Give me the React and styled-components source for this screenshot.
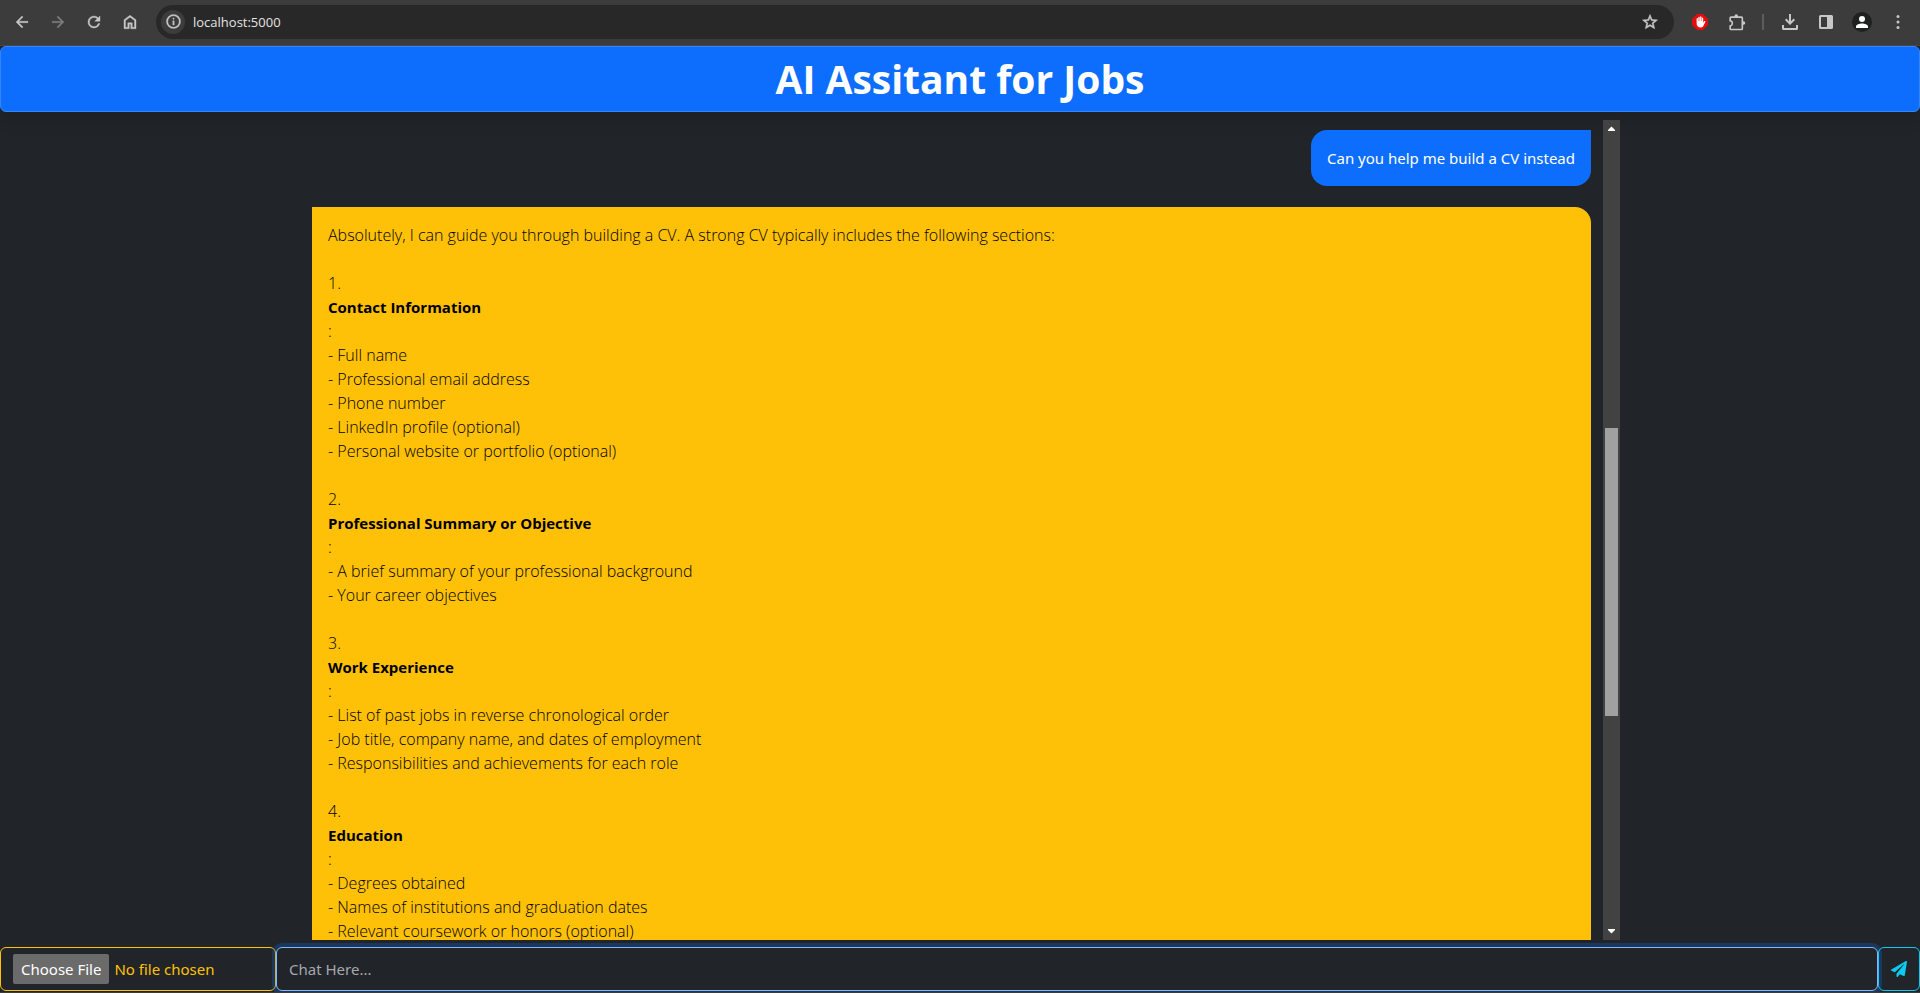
import React from "react";
import styled, { createGlobalStyle, css } from "styled-components";

const GlobalStyle = createGlobalStyle`
  *, *::before, *::after { box-sizing: border-box; }
  body { margin: 0; background: #212529; }
  body, input, button { font-family: "Segoe UI", "Noto Sans", "Open Sans", sans-serif; }
`;

const Page = styled.div`
  display: flex;
  flex-direction: column;
  height: 100vh;
  background: #212529;
  color: #dee2e6;
  font-size: 15px;
  line-height: 24px;
  overflow: hidden;
  border-bottom: 1px solid #3c3c3c;
`;

const BrowserBar = styled.nav`
  display: flex;
  align-items: center;
  gap: 8px;
  flex: none;
  height: 46px;
  padding: 0 8px 2px 4px;
  background: #3c3c3c;
  border-bottom: 1px solid #4a4a4a;
`;

const IconButton = styled.button`
  display: grid;
  place-items: center;
  flex: none;
  width: ${(p) => p.$size || 28}px;
  height: ${(p) => p.$size || 28}px;
  padding: 0;
  border: 0;
  border-radius: 50%;
  background: ${(p) => p.$bg || "transparent"};
  color: ${(p) => (p.$muted ? "#7d7d7d" : "#c7c7c7")};
`;

const NavGroup = styled.div`
  display: flex;
  gap: 8px;
  padding: 0 4px;
`;

const ToolGroup = styled.div`
  display: flex;
  align-items: center;
  gap: 8px;
  padding-left: 4px;
`;

const AddressBar = styled.div`
  display: flex;
  align-items: center;
  flex: 1;
  height: 34px;
  padding: 0 10px 0 5px;
  border-radius: 17px;
  background: #282828;
`;

const Address = styled.input`
  flex: 1;
  min-width: 0;
  margin-left: 8px;
  padding: 0;
  border: 0;
  outline: 0;
  background: transparent;
  color: #e3e3e3;
  font-family: "Segoe UI", "Open Sans", sans-serif;
  font-size: 13px;
`;

const Divider = styled.span`
  width: 2px;
  height: 16px;
  margin: 0 4px;
  background: #5c5c5c;
`;

const Header = styled.header`
  flex: none;
  height: 66px;
  border: 1px solid #3485fd;
  border-radius: 6px;
  background: #0d6efd;
  box-shadow: 0 8px 16px rgba(0, 0, 0, 0.15);
  text-align: center;
`;

const Title = styled.h1`
  margin: 0;
  color: #fff;
  font-family: "Segoe UI", "Open Sans", sans-serif;
  font-size: 39px;
  font-weight: 700;
  line-height: 64px;
`;

const Chat = styled.main`
  display: flex;
  flex: 1;
  min-height: 0;
  width: 100%;
  max-width: 1320px;
  margin: 8px auto 7px;
`;

const Messages = styled.div`
  display: flex;
  flex-direction: column;
  gap: 21px;
  flex: 1;
  min-width: 0;
  padding: 10px 12px 0;
  overflow: hidden;
`;

const bubble = css`
  flex: none;
  padding: 16px;
`;

const UserMessage = styled.div`
  ${bubble}
  align-self: flex-end;
  border-radius: 16px 0 16px 16px;
  background: #0d6efd;
  color: #fff;
`;

const AssistantMessage = styled.article`
  ${bubble}
  border-radius: 0 16px 16px 16px;
  background: #ffc107;
  color: #000;
  font-family: "Segoe UI", "Open Sans", sans-serif;
  font-size: 16px;
  font-weight: 300;
`;

const Line = styled.div`
  min-height: 24px;
`;

const Section = styled.section`
  padding-top: 24px;
`;

const SectionTitle = styled.h2`
  margin: 0;
  font-size: 15px;
  font-weight: 700;
  line-height: 24px;
`;

const Scrollbar = styled.div`
  display: flex;
  flex-direction: column;
  align-items: center;
  flex: none;
  width: 17px;
  background: #424242;
`;

const ScrollArrow = styled.div`
  display: grid;
  place-items: center;
  flex: none;
  width: 17px;
  height: 17px;
`;

const ScrollTrack = styled.div`
  display: grid;
  grid-template-rows: 291fr 288fr 207fr;
  flex: 1;
  width: 13px;
`;

const ScrollThumb = styled.div`
  grid-row: 2;
  background: #a1a1a1;
`;

const Composer = styled.form`
  display: flex;
  flex: none;
  height: 45px;
  padding-bottom: 1px;
`;

const FileInput = styled.input`
  flex: none;
  width: 276px;
  padding: 6px 12px;
  border: 1px solid #ffc107;
  border-radius: 6px;
  background: transparent;
  color: #ffc107;
  font-size: 15px;
  line-height: 24px;

  &::file-selector-button {
    height: 30px;
    margin: 0 5px 0 0;
    padding: 0 8px;
    border: 0;
    border-radius: 2px;
    background: #6b6b6b;
    color: #fff;
    font: inherit;
  }
`;

const MessageInput = styled.input`
  flex: 1;
  min-width: 0;
  padding: 6px 12px;
  border: 1px solid #86b7fe;
  border-radius: 6px;
  outline: 0;
  background: #212529;
  color: #dee2e6;
  box-shadow: 0 0 0 4px rgba(13, 110, 253, 0.25);
  font-size: 15px;

  &::placeholder { color: #a6a8aa; opacity: 1; }
`;

const SendButton = styled.button`
  display: grid;
  place-items: center;
  flex: none;
  width: 42px;
  padding: 0;
  border: 1px solid #0dcaf0;
  border-radius: 6px;
  background: transparent;
  color: #0dcaf0;
`;

const Glyph = ({ size = 18, box = 24, bold = 0, children }) => (
  <svg
    width={size}
    height={size}
    viewBox={`0 0 ${box} ${box}`}
    fill="currentColor"
    stroke={bold ? "currentColor" : "none"}
    strokeWidth={bold}
    aria-hidden="true"
  >
    {children}
  </svg>
);

const sections = [
  {
    title: "Contact Information",
    items: [
      "Full name",
      "Professional email address",
      "Phone number",
      "LinkedIn profile (optional)",
      "Personal website or portfolio (optional)",
    ],
  },
  {
    title: "Professional Summary or Objective",
    items: ["A brief summary of your professional background", "Your career objectives"],
  },
  {
    title: "Work Experience",
    items: [
      "List of past jobs in reverse chronological order",
      "Job title, company name, and dates of employment",
      "Responsibilities and achievements for each role",
    ],
  },
  {
    title: "Education",
    items: [
      "Degrees obtained",
      "Names of institutions and graduation dates",
      "Relevant coursework or honors (optional)",
    ],
  },
];

function BrowserToolbar() {
  return (
    <BrowserBar aria-label="Browser">
      <NavGroup>
        <IconButton aria-label="Back">
          <Glyph bold={0.4}><path d="M20 11H7.83l5.59-5.59L12 4l-8 8 8 8 1.41-1.41L7.83 13H20z" /></Glyph>
        </IconButton>
        <IconButton aria-label="Forward" $muted>
          <Glyph bold={0.4}><path d="M12 4l-1.41 1.41L16.17 11H4v2h12.17l-5.58 5.59L12 20l8-8z" /></Glyph>
        </IconButton>
        <IconButton aria-label="Reload">
          <Glyph bold={0.5}><path d="M17.65 6.35A7.96 7.96 0 0 0 12 4a8 8 0 1 0 7.73 10h-2.08A6 6 0 1 1 12 6c1.66 0 3.14.69 4.22 1.78L13 11h7V4z" /></Glyph>
        </IconButton>
        <IconButton aria-label="Home">
          <Glyph bold={0.5}><path d="M6 19h3v-6h6v6h3v-9l-6-4.5L6 10zm-2 2V9l8-6 8 6v12h-7v-6h-2v6z" /></Glyph>
        </IconButton>
      </NavGroup>
      <AddressBar>
        <IconButton aria-label="Site information" $size={24} $bg="#3c3c3c">
          <Glyph size={17} bold={0.5}><path d="M11 17h2v-6h-2zm1-8a1 1 0 0 0 1-1 1 1 0 1 0-2 0 1 1 0 0 0 1 1zm0 13a10 10 0 1 1 0-20 10 10 0 0 1 0 20zm0-2a8 8 0 1 0 0-16 8 8 0 0 0 0 16z" /></Glyph>
        </IconButton>
        <Address aria-label="Address" defaultValue="localhost:5000" />
        <IconButton aria-label="Bookmark">
          <Glyph bold={0.7}><path d="M22 9.24l-7.19-.62L12 2 9.19 8.63 2 9.24l5.46 4.73L5.82 21 12 17.27 18.18 21l-1.63-7.03zM12 15.4l-3.76 2.27 1-4.28-3.32-2.88 4.38-.38L12 6.1l1.71 4.04 4.38.38-3.32 2.88 1 4.28z" /></Glyph>
        </IconButton>
      </AddressBar>
      <ToolGroup>
        <IconButton aria-label="Ad blocker">
          <Glyph size={16} box={16}>
            <path fill="#e40d0d" d="M5 0h6l5 5v6l-5 5H5l-5-5V5z" />
            <path fill="#fff" d="M4.6 9V4.8c0-1 1.3-1 1.3 0V7h.4V3.5c0-1.1 1.4-1.1 1.4 0V7h.4V2.9c0-1 1.4-1 1.4 0V7h.4V4.2c0-1 1.3-1 1.3 0v4.600l.8-1.200c.6-.9 1.700-.4 1.300.4l-2 4c-.5 1-1.200 1.400-2.500 1.400C5.800 13.400 4.600 12 4.600 9z" />
          </Glyph>
        </IconButton>
        <IconButton aria-label="Extensions">
          <Glyph size={20}><path d="M6 5.200h4.200v-.4a2.100 2.100 0 0 1 4.200 0v.4h4.200a2 2 0 0 1 2 2V11h.4a2.100 2.100 0 0 1 0 4.200h-.4V20a2 2 0 0 1-2 2H6a2 2 0 0 1-2-2v-4.100h.4a2.300 2.300 0 0 0 0-4.600H4V7.200a2 2 0 0 1 2-2zm0 2v2.500a4.200 4.200 0 0 1 0 7.800V20h12.600V7.200z" fillRule="evenodd" /></Glyph>
        </IconButton>
        <Divider />
        <IconButton aria-label="Downloads">
          <Glyph size={16} box={16}><path d="M7 0h2v7.200l2.600-2.600L13 6l-5 5-5-5 1.400-1.400L7 7.200zM0 11h2v3h12v-3h2v3.500a1.500 1.500 0 0 1-1.500 1.500h-13A1.500 1.500 0 0 1 0 14.500z" /></Glyph>
        </IconButton>
        <IconButton aria-label="Side panel">
          <Glyph size={16} box={16}><path fillRule="evenodd" d="M2.500 1h11A1.500 1.500 0 0 1 15 2.500v11a1.500 1.500 0 0 1-1.500 1.500h-11A1.500 1.500 0 0 1 1 13.500v-11A1.500 1.500 0 0 1 2.500 1zM3 3v10h6V3z" /></Glyph>
        </IconButton>
        <IconButton aria-label="Profile">
          <Glyph size={20} box={20}>
            <circle cx="10" cy="10" r="10" fill="#1f2020" />
            <circle cx="10" cy="7" r="3" fill="#fff" />
            <path fill="#fff" d="M4 16v-1.500c0-2 3.500-3 6-3s6 1 6 3V16z" />
          </Glyph>
        </IconButton>
        <IconButton aria-label="More">
          <Glyph size={16} box={16}>
            <circle cx="8" cy="2.500" r="1.500" /><circle cx="8" cy="8" r="1.500" /><circle cx="8" cy="13.500" r="1.500" />
          </Glyph>
        </IconButton>
      </ToolGroup>
    </BrowserBar>
  );
}

export default function App() {
  return (
    <Page>
      <GlobalStyle />
      <BrowserToolbar />
      <Header><Title>AI Assitant for Jobs</Title></Header>
      <Chat>
        <Messages>
          <UserMessage>Can you help me build a CV instead</UserMessage>
          <AssistantMessage>
            <Line>Absolutely, I can guide you through building a CV. A strong CV typically includes the following sections:</Line>
            {sections.map((section, i) => (
              <Section key={section.title}>
                <Line>{i + 1}.</Line>
                <SectionTitle>{section.title}</SectionTitle>
                <Line>:</Line>
                {section.items.map((item) => <Line key={item}>- {item}</Line>)}
              </Section>
            ))}
          </AssistantMessage>
        </Messages>
        <Scrollbar aria-hidden="true">
          <ScrollArrow><Glyph size={7} box={7}><path fill="#fff" d="M3.500 1.500L7 5v1H0V5z" /></Glyph></ScrollArrow>
          <ScrollTrack><ScrollThumb /></ScrollTrack>
          <ScrollArrow><Glyph size={7} box={7}><path fill="#fff" d="M0 1h7v1L3.500 5.500 0 2z" /></Glyph></ScrollArrow>
        </Scrollbar>
      </Chat>
      <Composer onSubmit={(e) => e.preventDefault()}>
        <FileInput type="file" aria-label="Choose a file" />
        <MessageInput type="text" aria-label="Message" placeholder="Chat Here..." />
        <SendButton aria-label="Send">
          <Glyph size={16} box={512}><path d="M476 3.200L12.500 270.600c-18.100 10.400-15.800 35.600 2.200 43.200L121 358.400l287.300-253.200c5.500-4.900 13.300 2.600 8.600 8.300L176 407v80.500c0 23.600 28.500 32.900 42.500 15.800L282 426l124.600 52.200c14.200 6 30.400-2.900 33-18.200l72-432C515 7.800 493.300-6.800 476 3.200z" /></Glyph>
        </SendButton>
      </Composer>
    </Page>
  );
}
